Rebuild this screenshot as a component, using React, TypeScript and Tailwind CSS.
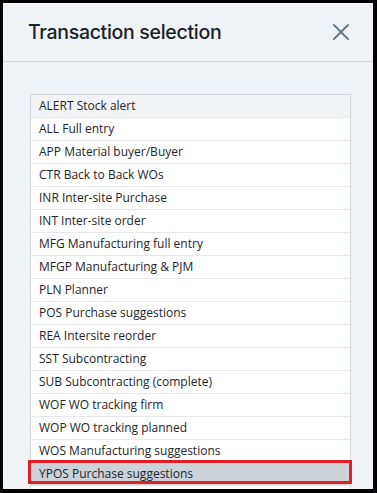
import { X } from 'lucide-react'

const transactions = [
  'ALERT Stock alert',
  'ALL Full entry',
  'APP Material buyer/Buyer',
  'CTR Back to Back WOs',
  'INR Inter-site Purchase',
  'INT Inter-site order',
  'MFG Manufacturing full entry',
  'MFGP Manufacturing & PJM',
  'PLN Planner',
  'POS Purchase suggestions',
  'REA Intersite reorder',
  'SST Subcontracting',
  'SUB Subcontracting (complete)',
  'WOF WO tracking firm',
  'WOP WO tracking planned',
  'WOS Manufacturing suggestions',
  'YPOS Purchase suggestions',
  '',
]

export default function App() {
  return (
    <div className="h-[493px] w-[377px] overflow-hidden border-t-[3px] border-l-[3px] border-r-4 border-b-4 border-black bg-[#f0f3f5]">
      <div className="flex h-[59px] items-center justify-between border-b border-[#ccd3d9] pl-[25px] pr-[18px]">
        <h1 className="pt-px font-['Inter',sans-serif] text-[19.5px] font-medium tracking-[-0.3px] text-[#1b2127]">
          Transaction selection
        </h1>
        <X className="h-[28px] w-[28px] text-[#63798a]" strokeWidth={1.6} />
      </div>
      <div className="px-[27px] pt-[32px]">
        <ul className="w-[321px] border border-[#cfd6dc] bg-white font-['Open_Sans',sans-serif] text-[12px] text-[#1d252c]">
          {transactions.map((label, index) => {
            const selected = label.startsWith('YPOS')
            return (
              <li
                key={index}
                className={
                  'relative flex h-[23px] items-center border-b border-[#e6e9ec] pl-[8px] ' +
                  (index === 0 ? 'bg-[#f1f3f5]' : selected ? 'bg-[#cbd2d8]' : 'bg-white')
                }
              >
                {label}
                {selected && (
                  <span className="absolute top-[-3px] bottom-[1px] left-[-3px] right-[-2px] border-[3px] border-[#e41e26]" />
                )}
              </li>
            )
          })}
        </ul>
      </div>
    </div>
  )
}
